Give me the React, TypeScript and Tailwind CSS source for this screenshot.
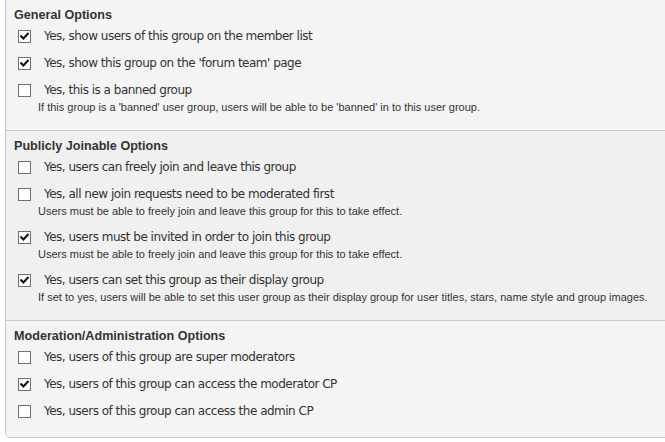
import React from "react";

type Item = { label: string; checked: boolean; desc?: string };
type Section = { title: string; items: Item[]; bg: string };

const sections: Section[] = [
  {
    title: "General Options",
    bg: "bg-[#f4f4f4]",
    items: [
      { label: "Yes, show users of this group on the member list", checked: true },
      { label: "Yes, show this group on the 'forum team' page", checked: true },
      {
        label: "Yes, this is a banned group",
        checked: false,
        desc: "If this group is a 'banned' user group, users will be able to be 'banned' in to this user group.",
      },
    ],
  },
  {
    title: "Publicly Joinable Options",
    bg: "bg-[#f0f0f0]",
    items: [
      { label: "Yes, users can freely join and leave this group", checked: false },
      {
        label: "Yes, all new join requests need to be moderated first",
        checked: false,
        desc: "Users must be able to freely join and leave this group for this to take effect.",
      },
      {
        label: "Yes, users must be invited in order to join this group",
        checked: true,
        desc: "Users must be able to freely join and leave this group for this to take effect.",
      },
      {
        label: "Yes, users can set this group as their display group",
        checked: true,
        desc: "If set to yes, users will be able to set this user group as their display group for user titles, stars, name style and group images.",
      },
    ],
  },
  {
    title: "Moderation/Administration Options",
    bg: "bg-[#f4f4f4]",
    items: [
      { label: "Yes, users of this group are super moderators", checked: false },
      { label: "Yes, users of this group can access the moderator CP", checked: true },
      { label: "Yes, users of this group can access the admin CP", checked: false },
    ],
  },
];

function Box({ checked }: { checked: boolean }) {
  return (
    <span className="w-[13px] h-[13px] border border-[#707070] bg-white flex items-center justify-center shrink-0">
      {checked && (
        <svg width="9" height="9" viewBox="0 0 9 9">
          <path d="M1.2 4.2 L3.4 6.5 L7.8 1.8" stroke="#111" strokeWidth="2.1" fill="none" strokeLinecap="square" />
        </svg>
      )}
    </span>
  );
}

export default function App() {
  return (
    <div className="w-[665px] h-[442px] bg-white overflow-hidden">
      <div className="ml-[5px] w-[670px] border-l border-b border-[#c8c8c8] rounded-bl-[5px] overflow-hidden">
        {sections.map((s, si) => (
          <div
            key={si}
            className={`${s.bg} pt-[7px] pb-[16px] ${si > 0 ? "border-t border-[#c8c8c8]" : ""}`}
          >
            <div className="h-[16px] leading-[16px] pl-[8px] text-[12.6px] font-bold text-[#333] [font-family:'Liberation_Sans',Arial,sans-serif]">
              {s.title}
            </div>
            <div className="flex flex-col pt-[1px]">
              {s.items.map((it, ii) => {
                const last = ii === s.items.length - 1;
                return (
                  <div key={ii} className={last ? "" : it.desc ? "mb-[7px]" : "mb-[5px]"}>
                    <div className="h-[22px] pt-[2px] flex items-center pl-[12px]">
                      <Box checked={it.checked} />
                      <span className="ml-[13px] text-[12px] text-[#333] whitespace-nowrap [font-family:'DejaVu_Sans',Verdana,sans-serif] tracking-[-0.5px]">
                        {it.label}
                      </span>
                    </div>
                    {it.desc && (
                      <div className="h-[14px] leading-[14px] pl-[32px] text-[11px] text-[#333] whitespace-nowrap [font-family:'Liberation_Sans',Arial,sans-serif]">
                        {it.desc}
                      </div>
                    )}
                  </div>
                );
              })}
            </div>
          </div>
        ))}
      </div>
    </div>
  );
}
